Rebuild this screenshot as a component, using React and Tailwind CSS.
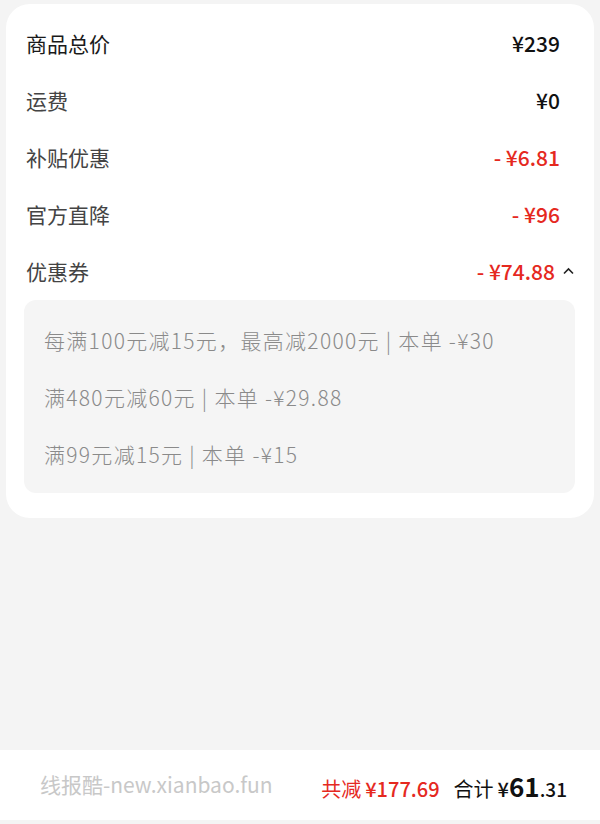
import React from 'react';

const rows = [
  { label: '商品总价', value: '¥239', red: false, dark: true },
  { label: '运费', value: '¥0', red: false },
  { label: '补贴优惠', value: '- ¥6.81', red: true },
  { label: '官方直降', value: '- ¥96', red: true },
];

const coupons = [
  '每满100元减15元，最高减2000元 | 本单 -¥30',
  '满480元减60元 | 本单 -¥29.88',
  '满99元减15元 | 本单 -¥15',
];

const font = { fontFamily: '"Noto Sans CJK SC", "Noto Sans", sans-serif' };

export default function App() {
  return (
    <div className="h-[824px] w-[600px] bg-[#f4f4f4] flex flex-col" style={font}>
      <div className="pt-[4px] px-[6px]">
        <div className="bg-white rounded-[24px] pt-[11px] pb-[25px] pl-[18px] pr-[19px]">
          {rows.map((r) => (
            <div key={r.label} className="h-[57px] flex items-center justify-between pl-[2px] pr-[15px]">
              <span className={`text-[21px] ${r.dark ? 'text-[#1a1a1a]' : 'text-[#444]'}`}>{r.label}</span>
              <span className={`text-[21px] font-medium ${r.red ? 'text-[#e5291f]' : 'text-[#111]'}`}>{r.value}</span>
            </div>
          ))}
          <div className="h-[57px] flex items-center justify-between pl-[2px]">
            <span className="text-[21px] text-[#444]">优惠券</span>
            <span className="flex items-center gap-[7px]">
              <span className="text-[21px] font-medium text-[#e5291f]">- ¥74.88</span>
              <svg width="13" height="13" viewBox="0 0 13 13" fill="none" stroke="#222" strokeWidth="1.6">
                <path d="M2 8.5 L6.5 4 L11 8.5" />
              </svg>
            </span>
          </div>
          <div className="bg-[#f5f5f5] rounded-[12px] pt-[12px] pb-[10px] px-[20px]">
            {coupons.map((c) => (
              <div key={c} className="h-[57px] flex items-center text-[21px] tracking-[1.3px] font-light text-[#8a8a8a]">
                {c}
              </div>
            ))}
          </div>
        </div>
      </div>
      <div className="flex-1" />
      <div className="h-[70px] bg-white flex items-center justify-between pl-[40px] pr-[33px]">
        <span className="text-[21px] text-[#c8c8c8]">线报酷-new.xianbao.fun</span>
        <div className="flex items-baseline">
          <span className="text-[20px] text-[#e5291f]">共减</span>
          <span className="text-[20px] font-medium text-[#e5291f] ml-[4px]">¥177.69</span>
          <span className="text-[20px] text-[#111] ml-[14px]">合计</span>
          <span className="text-[20px] font-medium text-[#111] ml-[4px]">¥</span>
          <span className="text-[26px] font-bold text-[#111]">61</span>
          <span className="text-[19px] font-medium text-[#111]">.31</span>
        </div>
      </div>
      <div className="h-[4px]" />
    </div>
  );
}
